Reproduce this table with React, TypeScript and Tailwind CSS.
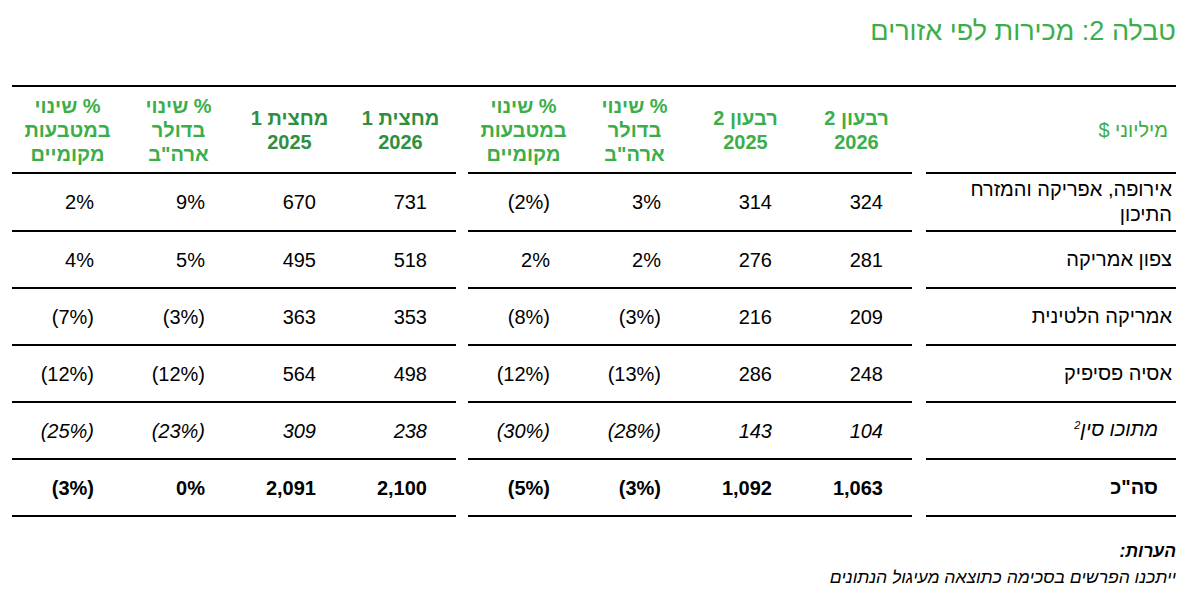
import React from "react";

const BRIGHT = "text-[#3cae49]";
const DARK = "text-[#2f8f40]";

type Row = {
  label: React.ReactNode;
  labelPad?: string;
  vals: string[];
  style?: "italic" | "bold";
  h: string;
};

const rows: Row[] = [
  { label: "אירופה, אפריקה והמזרח התיכון", vals: ["324", "314", "3%", "(2%)", "731", "670", "9%", "2%"], h: "h-[58px]" },
  { label: "צפון אמריקה", vals: ["281", "276", "2%", "2%", "518", "495", "5%", "4%"], h: "h-[57px]" },
  { label: "אמריקה הלטינית", vals: ["209", "216", "(3%)", "(8%)", "353", "363", "(3%)", "(7%)"], h: "h-[57px]" },
  { label: "אסיה פסיפיק", vals: ["248", "286", "(13%)", "(12%)", "498", "564", "(12%)", "(12%)"], h: "h-[57px]" },
  {
    label: (
      <>
        מתוכו סין<span className="relative -top-[7px] text-[11px]">2</span>
      </>
    ),
    labelPad: "pr-[18px]",
    vals: ["104", "143", "(28%)", "(30%)", "238", "309", "(23%)", "(25%)"],
    style: "italic",
    h: "h-[57px]",
  },
  {
    label: 'סה"כ',
    labelPad: "pr-[18px]",
    vals: ["1,063", "1,092", "(3%)", "(5%)", "2,100", "2,091", "0%", "(3%)"],
    style: "bold",
    h: "h-[57px]",
  },
];

const headers: { lines: string[]; color: string }[] = [
  { lines: ["רבעון 2", "2026"], color: BRIGHT },
  { lines: ["רבעון 2", "2025"], color: BRIGHT },
  { lines: ["% שינוי", "בדולר", 'ארה"ב'], color: BRIGHT },
  { lines: ["% שינוי", "במטבעות", "מקומיים"], color: BRIGHT },
  { lines: ["מחצית 1", "2026"], color: DARK },
  { lines: ["מחצית 1", "2025"], color: DARK },
  { lines: ["% שינוי", "בדולר", 'ארה"ב'], color: BRIGHT },
  { lines: ["% שינוי", "במטבעות", "מקומיים"], color: BRIGHT },
];

function HeaderCell({ lines, color }: { lines: string[]; color: string }) {
  return (
    <div className={`border-b-2 border-black flex items-center justify-center text-center font-bold text-[20px] leading-[24px] ${color}`}>
      <div>
        {lines.map((l, i) => (
          <div key={i}>{l}</div>
        ))}
      </div>
    </div>
  );
}

export default function App() {
  return (
    <div
      dir="rtl"
      className="w-[1192px] h-[598px] bg-white pl-[12px] pr-[16px] pt-[15px] text-black"
      style={{ fontFamily: '"Liberation Sans", Arial, "DejaVu Sans", sans-serif' }}
    >
      <h1 className="text-[27px] leading-[32px] text-[#3cae49] font-normal">טבלה 2: מכירות לפי אזורים</h1>

      <div className="mt-[38px] border-t-2 border-black grid grid-cols-[250px_14px_111px_111px_111px_111px_12px_111px_111px_111px_111px] grid-rows-[87px]">
        <div className={`border-b-2 border-black flex items-center pr-[8px] text-[20px] ${BRIGHT}`}>מיליוני $</div>
        <div />
        {headers.slice(0, 4).map((h, i) => (
          <HeaderCell key={i} {...h} />
        ))}
        <div />
        {headers.slice(4).map((h, i) => (
          <HeaderCell key={i + 4} {...h} />
        ))}

        {rows.map((r, ri) => {
          const st = r.style === "italic" ? "italic" : r.style === "bold" ? "font-bold" : "";
          const num = (v: string, k: number) => (
            <div key={k} className={`${r.h} border-b-2 border-black flex items-center justify-start pr-[29px] text-[20px] ${st}`}>
              <span dir="ltr">{v}</span>
            </div>
          );
          return (
            <React.Fragment key={ri}>
              <div className={`${r.h} border-b-2 border-black flex items-center ${r.labelPad ?? "pr-[4px]"} text-[20px] leading-[25px] ${st}`}>
                <span>{r.label}</span>
              </div>
              <div />
              {r.vals.slice(0, 4).map((v, i) => num(v, i))}
              <div />
              {r.vals.slice(4).map((v, i) => num(v, i + 4))}
            </React.Fragment>
          );
        })}
      </div>

      <div className="mt-[21px] text-[17.5px] leading-[26px] italic">
        <div className="font-bold">הערות:</div>
        <div>ייתכנו הפרשים בסכימה כתוצאה מעיגול הנתונים</div>
      </div>
    </div>
  );
}
